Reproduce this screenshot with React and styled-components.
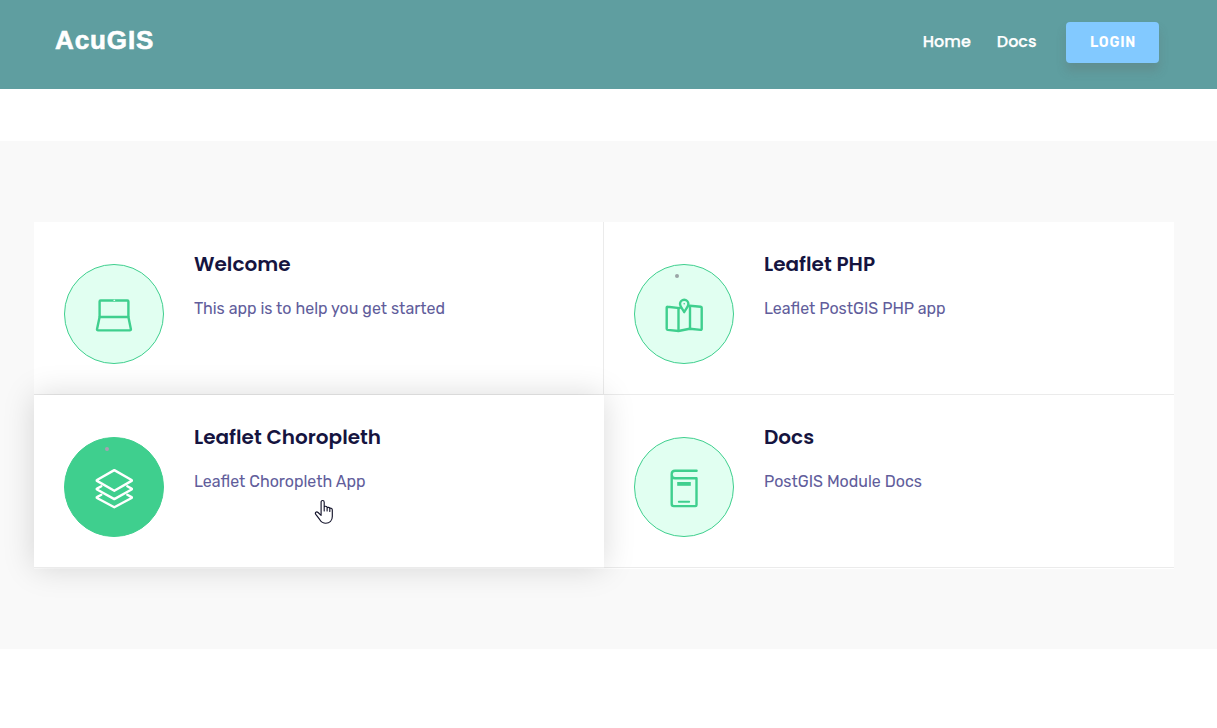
import React from "react";
import styled, { createGlobalStyle, css } from "styled-components";

const GlobalStyle = createGlobalStyle`
  *, *::before, *::after { box-sizing: border-box; }
  body { margin: 0; background: #fff; overflow: hidden; }
  h4, p { margin: 0; }
`;

const headingFont = `Poppins, Inter, "Liberation Sans", sans-serif`;
const bodyFont = `Rubik, Roboto, "Liberation Sans", sans-serif`;

const Header = styled.header`
  display: flex;
  justify-content: space-between;
  align-items: flex-start;
  height: 89px;
  padding: 22px 58px 0 55px;
  background: #5f9ea0;
`;

const Logo = styled.a`
  margin-top: 3px;
  font: 700 26px/30px "Liberation Sans", Arial, sans-serif;
  letter-spacing: 0.9px;
  color: #fff;
  -webkit-text-stroke: 0.6px #fff;
  stroke-linejoin: round;
`;

const Nav = styled.nav`
  display: flex;
  align-items: center;
  height: 41px;
`;

const NavLink = styled.a`
  margin-right: ${(p) => p.$gap}px;
  padding-bottom: 2px;
  font: 500 16px/24px ${headingFont};
  color: #fff;
  -webkit-text-stroke: 0.25px #fff;
`;

const LoginButton = styled.button`
  width: 93px;
  height: 41px;
  padding: 0 0 0 1px;
  border: 0;
  border-radius: 4px;
  background: #82c9ff;
  box-shadow: 0 8px 10px rgba(100, 100, 100, 0.25);
  font: 600 14px/41px ${bodyFont};
  letter-spacing: 0.8px;
  color: #fff;
`;

const Section = styled.section`
  margin-top: 52px;
  height: 508px;
  padding: 81px 43px 0 34px;
  background: #f9f9f9;
`;

const Grid = styled.div`
  display: grid;
  grid-template-columns: 570px 570px;
  grid-auto-rows: 173px;
  padding-bottom: 1px;
  width: 1140px;
  background: #fff;
`;

const Card = styled.article`
  display: flex;
  gap: 30px;
  padding: 30px;
  border-bottom: 1px solid #ebebeb;
  border-right: ${(p) => (p.$divider ? "1px solid #ebebeb" : "0")};
  background: #fff;
  ${(p) =>
    p.$active &&
    css`
      position: relative;
      z-index: 1;
      box-shadow: 0 0 30px rgba(0, 0, 0, 0.15);
    `}
`;

const IconCircle = styled.div`
  display: grid;
  place-items: center;
  position: relative;
  flex: none;
  width: 100px;
  height: 100px;
  margin-top: 12px;
  border: 1px solid #3fcf8e;
  border-radius: 50%;
  background: ${(p) => (p.$active ? "#3fcf8e" : "#e1fff1")};
  color: ${(p) => (p.$active ? "#fff" : "#3fcf8e")};
`;

const Dot = styled.span`
  position: absolute;
  top: 9px;
  left: 40px;
  width: 4px;
  height: 4px;
  border-radius: 50%;
  background: ${(p) => (p.$active ? "#a8a0b2" : "#9aa5a6")};
`;

const Glyph = styled.svg`
  display: block;
  width: 60px;
  height: 60px;
  margin-top: 2px;
  fill: none;
  stroke: currentColor;
  stroke-width: 2.4;
  stroke-linecap: round;
  stroke-linejoin: round;
`;

const CardTitle = styled.h4`
  margin-bottom: 18px;
  font: 600 20px/24px ${headingFont};
  color: #15143f;
  white-space: nowrap;
`;

const CardText = styled.p`
  font: 400 16px/30px ${bodyFont};
  color: #615d9b;
  white-space: nowrap;
`;

const Pointer = styled.svg`
  position: absolute;
  left: 280px;
  top: 104px;
  width: 20px;
  height: 26px;
`;

const LaptopIcon = () => (
  <Glyph viewBox="0 0 60 60">
    <path d="M15.6 31.5V16.5a1 1 0 0 1 1-1h26.8a1 1 0 0 1 1 1v15" />
    <path d="M15.6 32h28.8l2.5 12.2a1 1 0 0 1-1 1.2H14a1 1 0 0 1-1-1.2z" />
    <path d="M30 15.4h.6" stroke="#e1fff1" strokeWidth="1.2" />
  </Glyph>
);

const MapIcon = () => (
  <Glyph viewBox="0 0 60 60">
    <path d="M25.7 23.1l-12.2-1.3a.7.7 0 0 0-.8.7v21.2c0 .7.4 1.1 1 1.2l10.8 1.1 11.2-2.2 11.1 1.1a.8.8 0 0 0 .9-.8V22.8c0-.6-.4-1-1-1.1l-11-1" />
    <path d="M24.5 23.2v22.5M36 21.2v22.4" />
    <path d="M30.2 27.2c-.9-2.5-4.2-5.3-4.2-8.2a4.2 4.2 0 0 1 8.4 0c0 2.9-3.3 5.7-4.2 8.2z" />
    <circle cx="30.2" cy="18.8" r=".8" fill="currentColor" stroke="none" />
  </Glyph>
);

const LayersIcon = () => (
  <Glyph viewBox="0 0 60 60">
    <path d="M30.3 12.1l17.3 9.9a.5.5 0 0 1 0 .9l-17.3 9.9-17.3-9.9a.5.5 0 0 1 0-.9z" />
    <path d="M17.3 28.3l-4.3 2.3a.5.5 0 0 0 0 .9l17.3 9.6 17.3-9.6a.5.5 0 0 0 0-.9l-4.3-2.3" />
    <path d="M17.3 36.8l-4.3 2.3a.5.5 0 0 0 0 .9l17.3 9.3 17.3-9.3a.5.5 0 0 0 0-.9l-4.3-2.3" />
  </Glyph>
);

const BookIcon = () => (
  <Glyph viewBox="0 0 60 60">
    <path d="M42.6 12.7H21c-2 0-3.3 1.4-3.3 3.4v30c0 1.2.8 2 2 2h21.6c.7 0 1.2-.5 1.2-1.2V20.2H21c-2 0-3.3-1.3-3.3-3.500" />
    <path d="M24.8 43.7h10.4" strokeWidth="1.9" />
    <path d="M23.2 24h13.6v3.8H23.2z" fill="currentColor" stroke="none" />
  </Glyph>
);

const HandPointer = () => (
  <Pointer viewBox="0 0 20 26">
    <path
      d="M7.1 15.8V3.1C7.1 2 7.8 1.5 8.6 1.5s1.6.6 1.6 1.7v7.4M10.2 12V8.2c0-1.3 2.9-1.3 2.9.3V12M13.1 9c.3-1 2.7-.9 2.7.7V12.5M15.8 9.7c.4-.9 2.5-.6 2.5 1.2v6.6c0 4-2.7 6.7-6.5 6.7-2.9 0-4.6-1.3-6-3.5l-4-5.4c-1.2-1.7.6-3.1 2.3-1.8l3 2.9"
      fill="#fff"
      stroke="#14142b"
      strokeWidth="1.15"
      strokeLinecap="round"
      strokeLinejoin="round"
    />
  </Pointer>
);

const cards = [
  { title: "Welcome", text: "This app is to help you get started", Icon: LaptopIcon, divider: true },
  { title: "Leaflet PHP", text: "Leaflet PostGIS PHP app", Icon: MapIcon, dot: true },
  { title: "Leaflet Choropleth", text: "Leaflet Choropleth App", Icon: LayersIcon, dot: true, active: true },
  { title: "Docs", text: "PostGIS Module Docs", Icon: BookIcon },
];

export default function App() {
  return (
    <>
      <GlobalStyle />
      <Header>
        <Logo>AcuGIS</Logo>
        <Nav>
          <NavLink $gap={26}>Home</NavLink>
          <NavLink $gap={29.5}>Docs</NavLink>
          <LoginButton>LOGIN</LoginButton>
        </Nav>
      </Header>
      <Section>
        <Grid>
          {cards.map(({ title, text, Icon, divider, dot, active }) => (
            <Card key={title} $divider={divider} $active={active}>
              <IconCircle $active={active}>
                <Icon />
                {dot && <Dot $active={active} />}
              </IconCircle>
              <div>
                <CardTitle>{title}</CardTitle>
                <CardText>{text}</CardText>
              </div>
              {active && <HandPointer />}
            </Card>
          ))}
        </Grid>
      </Section>
    </>
  );
}
